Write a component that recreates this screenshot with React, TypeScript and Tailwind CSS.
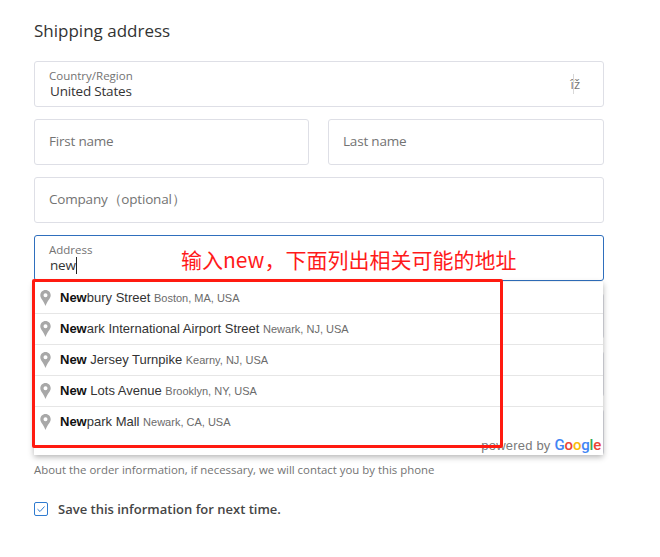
const UI_FONT = "font-['Open_Sans','Noto_Sans',sans-serif]";

const SUGGESTIONS = [
  { match: "New", rest: "bury Street", place: "Boston, MA, USA" },
  { match: "New", rest: "ark International Airport Street", place: "Newark, NJ, USA" },
  { match: "New", rest: " Jersey Turnpike", place: "Kearny, NJ, USA" },
  { match: "New", rest: " Lots Avenue", place: "Brooklyn, NY, USA" },
  { match: "New", rest: "park Mall", place: "Newark, CA, USA" },
];

function Field({ placeholder, className = "" }: { placeholder?: string; className?: string }) {
  return (
    <div className={`flex h-[46px] items-center rounded-[3px] border border-[#dedfe6] bg-white px-[14px] pb-[2px] text-[13.5px] tracking-[-0.2px] text-[#737373] ${className}`}>
      {placeholder}
    </div>
  );
}

function Pin() {
  return (
    <svg width="11" height="16" viewBox="0 0 11 16" className="shrink-0">
      <path
        fillRule="evenodd"
        fill="#a8a8a8"
        d="M5.5 0C2.5 0 0.3 2.3 0.3 5.2C0.3 8.4 3.6 10.6 5.5 16C7.4 10.6 10.7 8.4 10.7 5.2C10.7 2.3 8.5 0 5.5 0ZM5.5 3.2A2 2 0 1 1 5.5 7.2A2 2 0 1 1 5.5 3.2Z"
      />
    </svg>
  );
}

export default function App() {
  return (
    <div className={`relative h-[557px] w-[660px] overflow-hidden bg-white ${UI_FONT}`}>
      <div className="flex w-[604px] flex-col pl-[34px] pt-[19px]">
        <h2 className="h-[42px] text-[17px] leading-[24px] text-[#333333]">Shipping address</h2>

        <div className="flex flex-col gap-3">
          {/* 国家 */}
          <div className="relative h-[46px] rounded-[3px] border border-[#dedfe6] bg-white pl-[14px] pt-[6px]">
            <p className="text-[11.5px] leading-[15px] text-[#737373]">Country/Region</p>
            <p className="pl-px text-[13.5px] leading-[17px] tracking-[-0.2px] text-[#333333]">United States</p>
            <span className="absolute right-[23px] top-[13px] text-[13px] leading-[18px] text-[#777777]">îž</span>
            <span className="absolute right-[29px] top-[12px] h-5 w-px bg-[#d8d8d8]" />
          </div>

          <div className="flex gap-[19px]">
            <Field placeholder="First name" className="w-[275px]" />
            <Field placeholder="Last name" className="flex-1" />
          </div>

          <Field placeholder="Company（optional）" />

          {/* 入力中 */}
          <div className="h-[46px] rounded-[3px] border border-[#2f6fbd] bg-white pl-[14px] pt-[6px]">
            <p className="text-[11.5px] leading-[15px] text-[#737373]">Address</p>
            <p className="flex items-center pl-px text-[13.5px] leading-[17px] tracking-[-0.2px] text-[#333333]">
              new
              <span className="h-[17px] w-px bg-[#222222]" />
            </p>
          </div>

          {/* ドロップダウンの裏側 */}
          <Field />
          <Field />
          <Field />
        </div>

        <p className="mt-[7px] text-[11.4px] leading-[16px] text-[#737373]">
          About the order information, if necessary, we will contact you by this phone
        </p>

        <label className="mt-[22px] flex items-center gap-[10px] text-[13px] font-semibold leading-[18px] text-[#454545]">
          <span className="flex h-[14px] w-[14px] items-center justify-center rounded-[2px] border border-[#2f7bd0]">
            <svg width="10" height="10" viewBox="0 0 10 10" fill="none" stroke="#2f7bd0" strokeWidth="1">
              <path d="M1.5 5.2L4 7.5L8.5 2.5" />
            </svg>
          </span>
          Save this information for next time.
        </label>
      </div>

      {/* オートコンプリート */}
      <div className="absolute left-[34px] top-[282px] h-[173px] w-[569px] bg-white font-['Liberation_Sans',sans-serif] shadow-[0_2px_6px_rgba(0,0,0,0.3)]">
        {SUGGESTIONS.map((s, i) => (
          <div
            key={i}
            className={`flex h-[31px] items-center gap-[9px] pl-[6px] text-[13px] ${i > 0 ? "border-t border-[#e6e6e6]" : ""}`}
          >
            <Pin />
            <span className="whitespace-nowrap text-[#333333]">
              <b className="text-[#111111]">{s.match}</b>
              {s.rest} <span className="text-[11px] text-[#6b6b6b]">{s.place}</span>
            </span>
          </div>
        ))}
        <div className="absolute bottom-0 right-[2px] flex h-[19px] items-center gap-[4px] whitespace-nowrap">
          <span className="text-[13px] tracking-[0.2px] text-[#7a7a7a]">powered by</span>
          <span className="font-['Roboto',sans-serif] text-[15px] font-medium leading-none tracking-[-0.2px]">
            <span className="text-[#4285f4]">G</span>
            <span className="text-[#ea4335]">o</span>
            <span className="text-[#fbbc05]">o</span>
            <span className="text-[#4285f4]">g</span>
            <span className="text-[#34a853]">l</span>
            <span className="text-[#ea4335]">e</span>
          </span>
        </div>
      </div>

      {/* 注釈 */}
      <span className="absolute left-[181px] top-[244px] whitespace-nowrap font-['Noto_Sans_CJK_SC',sans-serif] text-[21px] leading-[30px] text-[#ff1a1a]">
        输入new，下面列出相关可能的地址
      </span>
      <div className="absolute left-[32px] top-[279px] h-[169px] w-[471px] rounded-[2px] border-[3px] border-[#ff1a10]" />
    </div>
  );
}
